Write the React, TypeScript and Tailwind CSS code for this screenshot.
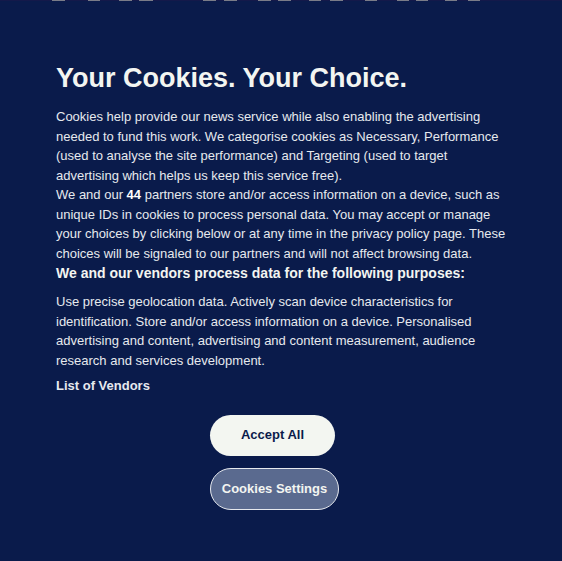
import React from 'react';

const dashes: [number, number][] = [
  [52, 65], [88, 100], [119, 132], [139, 153], [203, 216], [224, 237], [258, 271], [278, 291],
  [309, 321], [330, 343], [365, 377], [397, 409], [416, 428], [445, 457], [468, 480],
];

const App: React.FC = () => {
  return (
    <div className="min-h-[561px] w-full bg-[#0a1b4b] text-[#eef0f2]" style={{ fontFamily: '"Liberation Sans", Arial, sans-serif' }}>
      {/* leftover of the page under the banner */}
      <svg width="562" height="2" className="block">
        <rect x="0" y="0" width="562" height="1" fill="#14194a" />
        {dashes.map(([a, b]) => (
          <rect key={a} x={a} y="0" width={b - a} height="1" fill="#7a7c88" />
        ))}
      </svg>

      <div className="px-[56px] pt-[58px]">
        <h1 className="text-[27px] font-bold leading-[36px] text-[#f3f5f1]">Your Cookies. Your Choice.</h1>

        <div className="mt-[11px] w-[452px] text-[13px] leading-[19.5px] text-[#e6e9ee]">
          <p>
            Cookies help provide our news service while also enabling the advertising needed to fund this work. We
            categorise cookies as Necessary, Performance (used to analyse the site performance) and Targeting (used to
            target advertising which helps us keep this service free).
          </p>
          <p>
            We and our <b className="text-white">44</b> partners store and/or access information on a device, such as
            unique IDs in cookies to process personal data. You may accept or manage your choices by clicking below or
            at any time in the privacy policy page. These choices will be signaled to our partners and will not affect
            browsing data.
          </p>
          <h2 className="text-[14px] font-bold leading-[20px] text-[#f3f5f1]">
            We and our vendors process data for the following purposes:
          </h2>
          <p className="mt-[9px]">
            Use precise geolocation data. Actively scan device characteristics for identification. Store and/or access
            information on a device. Personalised advertising and content, advertising and content measurement,
            audience research and services development.
          </p>
          <p className="mt-[6px] font-bold">List of Vendors</p>
        </div>

        <div className="mt-[19px] flex w-[142px] flex-col items-start gap-[12px]" style={{ marginLeft: 154 }}>
          <button className="h-[41px] w-[125px] rounded-full bg-[#f3f6f1] text-[13px] font-bold text-[#0a1b4b]">
            Accept All
          </button>
          <button className="h-[42px] w-[129px] rounded-full border border-[#e6e9ee] bg-[#5a6a8f] text-[13px] font-bold text-[#f3f5f1]">
            Cookies Settings
          </button>
        </div>
      </div>
    </div>
  );
};

export default App;
